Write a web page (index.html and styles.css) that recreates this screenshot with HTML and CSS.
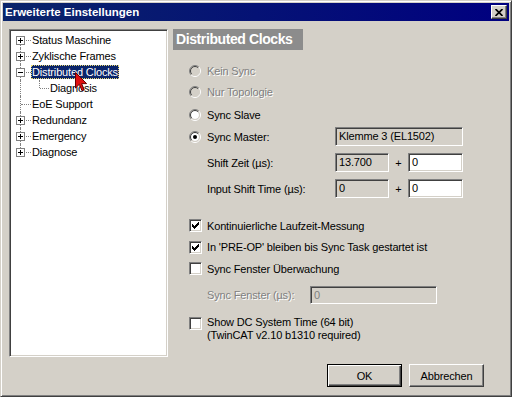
FILE: index.html
```html
<!DOCTYPE html>
<html>
<head>
    <title>Erweiterte Einstellungen</title>
    <link rel="stylesheet" href="styles.css">
</head>
<body>
<div class="window">
    <div class="titlebar">
        <span class="title">Erweiterte Einstellungen</span>
        <button class="close"><svg width="8" height="7" viewBox="0 0 8 7"><path d="M0.5 0 L7.5 7 M7.5 0 L0.5 7" stroke="#000" stroke-width="1.7"/></svg></button>
    </div>

    <div class="content">
        <div class="tree">
            <div class="node first"><span class="twig"><svg class="expander" width="9" height="9"><rect x="0.5" y="0.5" width="8" height="8" fill="#fff" stroke="#808080"/><path d="M2 4.5 H7 M4.5 2 V7" stroke="#000"/></svg></span><span class="label">Status Maschine</span></div>
            <div class="node"><span class="twig"><svg class="expander" width="9" height="9"><rect x="0.5" y="0.5" width="8" height="8" fill="#fff" stroke="#808080"/><path d="M2 4.5 H7 M4.5 2 V7" stroke="#000"/></svg></span><span class="label">Zyklische Frames</span></div>
            <div class="node"><span class="twig"><svg class="expander" width="9" height="9"><rect x="0.5" y="0.5" width="8" height="8" fill="#fff" stroke="#808080"/><path d="M2 4.5 H7" stroke="#000"/></svg></span><span class="label selected">Distributed Clocks</span></div>
            <div class="node"><span class="twig pass"></span><span class="twig child"></span><span class="label">Diagnosis</span></div>
            <div class="node"><span class="twig"></span><span class="label">EoE Support</span></div>
            <div class="node"><span class="twig"><svg class="expander" width="9" height="9"><rect x="0.5" y="0.5" width="8" height="8" fill="#fff" stroke="#808080"/><path d="M2 4.5 H7 M4.5 2 V7" stroke="#000"/></svg></span><span class="label">Redundanz</span></div>
            <div class="node"><span class="twig"><svg class="expander" width="9" height="9"><rect x="0.5" y="0.5" width="8" height="8" fill="#fff" stroke="#808080"/><path d="M2 4.5 H7 M4.5 2 V7" stroke="#000"/></svg></span><span class="label">Emergency</span></div>
            <div class="node last"><span class="twig"><svg class="expander" width="9" height="9"><rect x="0.5" y="0.5" width="8" height="8" fill="#fff" stroke="#808080"/><path d="M2 4.5 H7 M4.5 2 V7" stroke="#000"/></svg></span><span class="label">Diagnose</span></div>
        </div>

        <div class="panel">
            <div class="heading">Distributed Clocks</div>

            <div class="options">
                <div class="row disabled">
                    <span class="radio"><svg width="12" height="12"><circle cx="6" cy="6" r="4" fill="#d4d0c8"/><path d="M2.1 9.9 A5.5 5.5 0 0 1 9.9 2.1" fill="none" stroke="#808080"/><path d="M9.9 2.1 A5.5 5.5 0 0 1 2.1 9.9" fill="none" stroke="#fff"/><path d="M2.8 9.2 A4.5 4.5 0 0 1 9.2 2.8" fill="none" stroke="#404040"/><path d="M9.2 2.8 A4.5 4.5 0 0 1 2.8 9.2" fill="none" stroke="#d4d0c8"/></svg></span>
                    <span class="text">Kein Sync</span>
                </div>
                <div class="row disabled tall">
                    <span class="radio"><svg width="12" height="12"><circle cx="6" cy="6" r="4" fill="#d4d0c8"/><path d="M2.1 9.9 A5.5 5.5 0 0 1 9.9 2.1" fill="none" stroke="#808080"/><path d="M9.9 2.1 A5.5 5.5 0 0 1 2.1 9.9" fill="none" stroke="#fff"/><path d="M2.8 9.2 A4.5 4.5 0 0 1 9.2 2.8" fill="none" stroke="#404040"/><path d="M9.2 2.8 A4.5 4.5 0 0 1 2.8 9.2" fill="none" stroke="#d4d0c8"/></svg></span>
                    <span class="text">Nur Topologie</span>
                </div>
                <div class="row taller">
                    <span class="radio"><svg width="12" height="12"><circle cx="6" cy="6" r="4" fill="#fff"/><path d="M2.1 9.9 A5.5 5.5 0 0 1 9.9 2.1" fill="none" stroke="#808080"/><path d="M9.9 2.1 A5.5 5.5 0 0 1 2.1 9.9" fill="none" stroke="#fff"/><path d="M2.8 9.2 A4.5 4.5 0 0 1 9.2 2.8" fill="none" stroke="#404040"/><path d="M9.2 2.8 A4.5 4.5 0 0 1 2.8 9.2" fill="none" stroke="#d4d0c8"/></svg></span>
                    <span class="text">Sync Slave</span>
                </div>
                <div class="row">
                    <span class="radio"><svg width="12" height="12"><circle cx="6" cy="6" r="4" fill="#fff"/><path d="M2.1 9.9 A5.5 5.5 0 0 1 9.9 2.1" fill="none" stroke="#808080"/><path d="M9.9 2.1 A5.5 5.5 0 0 1 2.1 9.9" fill="none" stroke="#fff"/><path d="M2.8 9.2 A4.5 4.5 0 0 1 9.2 2.8" fill="none" stroke="#404040"/><path d="M9.2 2.8 A4.5 4.5 0 0 1 2.8 9.2" fill="none" stroke="#d4d0c8"/><circle cx="6" cy="6" r="2" fill="#000"/></svg></span>
                    <span class="text caption">Sync Master:</span>
                    <span class="field wide">Klemme 3 (EL1502)</span>
                </div>
                <div class="row indent spaced">
                    <span class="text caption">Shift Zeit (µs):</span>
                    <span class="field short">13.700</span>
                    <span class="plus">+</span>
                    <span class="field short editable">0</span>
                </div>
                <div class="row indent spaced">
                    <span class="text caption">Input Shift Time (µs):</span>
                    <span class="field short">0</span>
                    <span class="plus">+</span>
                    <span class="field short editable">0</span>
                </div>
            </div>

            <div class="checks">
                <div class="row">
                    <span class="check"><svg width="7" height="7" shape-rendering="crispEdges"><rect x="0" y="2" width="1" height="3"/><rect x="1" y="3" width="1" height="3"/><rect x="2" y="4" width="1" height="3"/><rect x="3" y="3" width="1" height="3"/><rect x="4" y="2" width="1" height="3"/><rect x="5" y="1" width="1" height="3"/><rect x="6" y="0" width="1" height="3"/></svg></span>
                    <span class="text">Kontinuierliche Laufzeit-Messung</span>
                </div>
                <div class="row tall">
                    <span class="check"><svg width="7" height="7" shape-rendering="crispEdges"><rect x="0" y="2" width="1" height="3"/><rect x="1" y="3" width="1" height="3"/><rect x="2" y="4" width="1" height="3"/><rect x="3" y="3" width="1" height="3"/><rect x="4" y="2" width="1" height="3"/><rect x="5" y="1" width="1" height="3"/><rect x="6" y="0" width="1" height="3"/></svg></span>
                    <span class="text">In 'PRE-OP' bleiben bis Sync Task gestartet ist</span>
                </div>
                <div class="row">
                    <span class="check"></span>
                    <span class="text">Sync Fenster Überwachung</span>
                </div>
                <div class="row indent window-row disabled">
                    <span class="text fenster">Sync Fenster (µs):</span>
                    <span class="field fenster-field">0</span>
                </div>
                <div class="row multi">
                    <span class="check"></span>
                    <span class="text">Show DC System Time (64 bit)<br>(TwinCAT v2.10 b1310 required)</span>
                </div>
            </div>

            <div class="buttons">
                <button class="btn default">OK</button>
                <button class="btn">Abbrechen</button>
            </div>
        </div>
    </div>

    <svg class="pointer" width="13" height="20" viewBox="0 0 13 20"><path d="M0.5 0.5 V16 L4.3 12.3 L7 18.7 L9.2 17.8 L6.6 11.6 H11.6 Z" fill="#e01010" stroke="#600" stroke-width="1"/></svg>
</div>
</body>
</html>
```

FILE: styles.css
```css
* { box-sizing: border-box; }
body { margin: 0; background: #d4d0c8; font-family: "Liberation Sans", Arial, sans-serif; font-size: 11px; letter-spacing: -0.15px; color: #000; }

.window { position: relative; width: 512px; height: 397px; display: flex; flex-direction: column; padding: 2px; background: #d4d0c8; border: 1px solid; border-color: #d4d0c8 #404040 #404040 #d4d0c8; box-shadow: inset 1px 1px #fff, inset -1px -1px #808080; }

.titlebar { height: 18px; display: flex; align-items: center; justify-content: space-between; padding: 0 2px; background: linear-gradient(to right, #0a246a, #000080); color: #fff; font-weight: bold; font-size: 11.5px; letter-spacing: 0; }
.close { width: 16px; height: 14px; padding: 0; display: flex; align-items: center; justify-content: center; background: #d4d0c8; border: 1px solid; border-color: #fff #404040 #404040 #fff; box-shadow: inset -1px -1px #808080, inset 1px 1px #d4d0c8; }

.content { flex: 1; display: flex; gap: 5px; padding: 8px 0 0 6px; }

/* tree view */
.tree { width: 159px; height: 328px; flex: none; padding: 2px 0 0 1px; background: #fff; border: 1px solid; border-color: #808080 #fff #fff #808080; box-shadow: inset 1px 1px #404040, inset -1px -1px #d4d0c8; }
.node { height: 16px; display: flex; align-items: center; }
.twig { position: relative; width: 20px; height: 16px; flex: none; }
.twig::before { content: ""; position: absolute; left: 9px; top: 0; height: 16px; border-left: 1px dotted #808080; }
.twig::after { content: ""; position: absolute; left: 10px; top: 8px; width: 10px; border-top: 1px dotted #808080; }
.node.first .twig::before { top: 8px; height: 8px; }
.node.last .twig::before { height: 8px; }
.twig.pass::after { display: none; }
.twig.child { width: 18px; }
.twig.child::before { left: 8px; height: 8px; }
.twig.child::after { left: 9px; width: 9px; }
.expander { position: absolute; left: 5px; top: 4px; z-index: 1; }
.label { height: 14px; line-height: 14px; padding: 0 1px; white-space: nowrap; }
.label.selected { background: #0a246a; color: #fff; outline: 1px dotted #e8d870; outline-offset: -1px; }

/* settings panel */
.panel { flex: 1; display: flex; flex-direction: column; }
.heading { align-self: flex-start; width: 130px; height: 21px; line-height: 21px; padding-left: 3px; background: #8c8c8c; color: #fff; font-weight: bold; font-size: 14px; letter-spacing: -0.4px; }

.options { margin-top: 10px; padding-left: 16px; display: flex; flex-direction: column; }
.checks { margin-top: 16px; padding-left: 16px; display: flex; flex-direction: column; }
.row { height: 21px; display: flex; align-items: center; white-space: nowrap; }
.row.tall { height: 22px; }
.row.taller { height: 23px; }
.row.spaced { margin-top: 5px; }
.row.indent { padding-left: 18px; }
.row.window-row { height: 20px; margin-top: 6px; }
.row.multi { height: auto; margin-top: 11px; align-items: flex-start; line-height: 13px; }
.row.multi .check { margin-top: 1px; }

.disabled .text { color: #808080; text-shadow: 1px 1px 0 #fff; }

.radio { width: 13px; height: 12px; margin-right: 5px; flex: none; display: flex; }
.check { width: 13px; height: 13px; margin-right: 5px; flex: none; display: flex; align-items: center; justify-content: center; background: #fff; border: 1px solid; border-color: #808080 #fff #fff #808080; box-shadow: inset 1px 1px #404040, inset -1px -1px #d4d0c8; }

.caption { width: 128px; }
.fenster { width: 103px; }

.field { height: 19px; line-height: 17px; padding: 0 3px; background: #d4d0c8; border: 1px solid; border-color: #808080 #fff #fff #808080; box-shadow: inset 1px 1px #404040, inset -1px -1px #d4d0c8; overflow: hidden; }
.field.editable { background: #fff; }
.field.wide { width: 128px; }
.field.short { width: 54px; }
.field.short.editable { width: 55px; }
.fenster-field { width: 127px; height: 18px; line-height: 16px; color: #808080; }
.plus { width: 19px; text-align: center; }

.buttons { margin-top: auto; display: flex; justify-content: flex-end; gap: 7px; padding: 0 25px 7px 0; }
.btn { width: 75px; height: 23px; padding: 0; font: inherit; letter-spacing: inherit; color: #000; background: #d4d0c8; border: 1px solid; border-color: #fff #404040 #404040 #fff; box-shadow: inset -1px -1px #808080, inset 1px 1px #d4d0c8; }
.btn.default { border-color: #000; box-shadow: inset 1px 1px #fff, inset -1px -1px #404040, inset -2px -2px #808080; }

.pointer { position: absolute; left: 74px; top: 71px; }
```
